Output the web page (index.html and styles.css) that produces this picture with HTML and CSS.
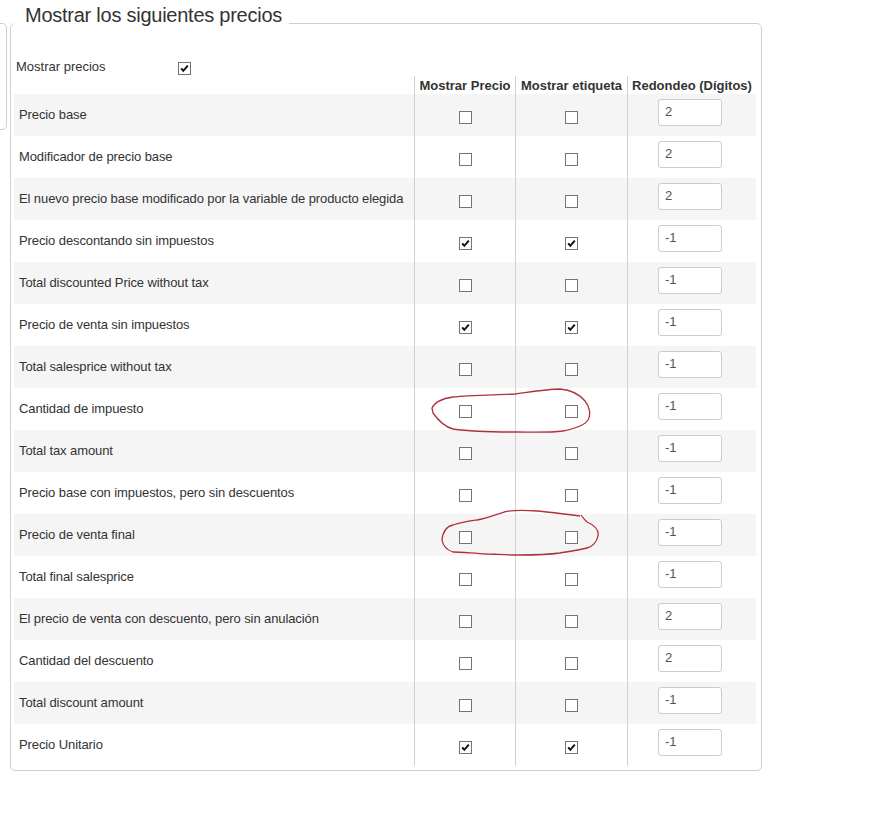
FILE: index.html
```html
<!DOCTYPE html>
<html lang="es">
<head>
  <meta charset="UTF-8" />
  <title>Mostrar los siguientes precios</title>
  <link rel="stylesheet" href="styles.css">
</head>
<body>
  <div class="page">
    <div class="side"></div>
    <fieldset class="prices">
      <legend>Mostrar los siguientes precios</legend>
      <div class="toggle">
        <label for="show_prices">Mostrar precios</label>
        <input type="checkbox" id="show_prices" checked />
      </div>
      <table class="price-table">
        <thead>
          <tr>
            <th class="c-label"></th>
            <th class="c-show">Mostrar Precio</th>
            <th class="c-tag">Mostrar etiqueta</th>
            <th class="c-round">Redondeo (Dígitos)</th>
          </tr>
        </thead>
        <tbody>
          <tr><td>Precio base</td><td><input type="checkbox" /></td><td><input type="checkbox" /></td><td><input type="text" value="2" /></td></tr>
          <tr><td>Modificador de precio base</td><td><input type="checkbox" /></td><td><input type="checkbox" /></td><td><input type="text" value="2" /></td></tr>
          <tr><td>El nuevo precio base modificado por la variable de producto elegida</td><td><input type="checkbox" /></td><td><input type="checkbox" /></td><td><input type="text" value="2" /></td></tr>
          <tr><td>Precio descontando sin impuestos</td><td><input type="checkbox" checked /></td><td><input type="checkbox" checked /></td><td><input type="text" value="-1" /></td></tr>
          <tr><td>Total discounted Price without tax</td><td><input type="checkbox" /></td><td><input type="checkbox" /></td><td><input type="text" value="-1" /></td></tr>
          <tr><td>Precio de venta sin impuestos</td><td><input type="checkbox" checked /></td><td><input type="checkbox" checked /></td><td><input type="text" value="-1" /></td></tr>
          <tr><td>Total salesprice without tax</td><td><input type="checkbox" /></td><td><input type="checkbox" /></td><td><input type="text" value="-1" /></td></tr>
          <tr><td>Cantidad de impuesto</td><td><input type="checkbox" /></td><td><input type="checkbox" /></td><td><input type="text" value="-1" /></td></tr>
          <tr><td>Total tax amount</td><td><input type="checkbox" /></td><td><input type="checkbox" /></td><td><input type="text" value="-1" /></td></tr>
          <tr><td>Precio base con impuestos, pero sin descuentos</td><td><input type="checkbox" /></td><td><input type="checkbox" /></td><td><input type="text" value="-1" /></td></tr>
          <tr><td>Precio de venta final</td><td><input type="checkbox" /></td><td><input type="checkbox" /></td><td><input type="text" value="-1" /></td></tr>
          <tr><td>Total final salesprice</td><td><input type="checkbox" /></td><td><input type="checkbox" /></td><td><input type="text" value="-1" /></td></tr>
          <tr><td>El precio de venta con descuento, pero sin anulación</td><td><input type="checkbox" /></td><td><input type="checkbox" /></td><td><input type="text" value="2" /></td></tr>
          <tr><td>Cantidad del descuento</td><td><input type="checkbox" /></td><td><input type="checkbox" /></td><td><input type="text" value="2" /></td></tr>
          <tr><td>Total discount amount</td><td><input type="checkbox" /></td><td><input type="checkbox" /></td><td><input type="text" value="-1" /></td></tr>
          <tr><td>Precio Unitario</td><td><input type="checkbox" checked /></td><td><input type="checkbox" checked /></td><td><input type="text" value="-1" /></td></tr>
        </tbody>
      </table>
    </fieldset>

    <!-- hand drawn marks over the screenshot -->
    <svg class="annot" width="871" height="823" viewBox="0 0 871 823">
      <path d="M432 408 C436 400 446 398 453 397 C470 395 495 395 515 394 C530 392 548 389 560 389 C572 390 580 395 585 401 C590 407 591 415 588 420 C584 426 573 429 563 431 C548 433 530 432 515 432 C500 432 475 432 453 429 C445 427 438 420 433 413 Z" />
      <path d="M442 540 C443 530 448 526 453 525 C462 522 470 521 477 520 C487 518 497 514 504 512 C512 510 525 510 537 511 C550 512 565 514 580 516 M581 515 C583 518 585 520 587 522 C594 525 599 530 598 536 C597 542 592 547 587 548 C575 551 565 552 560 553 C545 555 532 555 520 555 C505 555 495 554 487 554 C470 553 460 552 453 552 C447 550 443 546 442 540" />
    </svg>
  </div>
</body>
</html>
```

FILE: styles.css
```css
body {
  margin: 0;
  background: #fff;
  color: #333;
  font-family: "Liberation Sans", Arial, sans-serif;
  font-size: 13px;
}
.page {
  position: relative;
  display: flex;
  align-items: flex-start;
  gap: 3px;
}
.side {
  width: 6px;
  height: 105px;
  margin-top: 23px;
  border: 1px solid #cfcfcf;
  border-left: none;
  border-radius: 0 5px 5px 0;
}
.prices {
  margin: 3px 0 0 0;
  padding: 13px 5px 4px 3px;
  width: 742px;
  border: 1px solid #cfcfcf;
  border-radius: 5px;
  min-inline-size: auto;
}
.prices legend {
  padding: 0 7px 16px 11px;
  font-size: 20px;
  line-height: 24px;
  letter-spacing: -0.25px;
  color: #333;
}
.toggle {
  display: flex;
  align-items: center;
  height: 20px;
  padding-left: 2px;
}
.toggle label {
  width: 162px;
}
.toggle input {
  margin: 4px 0 0 0;
}
input[type="checkbox"] {
  appearance: none;
  -webkit-appearance: none;
  width: 13px;
  height: 13px;
  border: 1px solid #747474;
  border-radius: 0;
  background: #fff;
  box-sizing: border-box;
}
input[type="checkbox"]:checked {
  background: #fff url("data:image/svg+xml,%3Csvg xmlns='http://www.w3.org/2000/svg' viewBox='0 0 11 11'%3E%3Cpath d='M2.2 5.4l2.1 2.4L8.8 2.6' fill='none' stroke='%23111' stroke-width='2'/%3E%3C/svg%3E") no-repeat center / 11px 11px;
}
.price-table {
  width: 742px;
  border-collapse: separate;
  border-spacing: 0;
  table-layout: fixed;
}
.price-table th {
  height: 18px;
  padding: 0;
  font-weight: bold;
  text-align: center;
  vertical-align: middle;
  white-space: nowrap;
}
.price-table .c-label { width: 400px; }
.price-table .c-show { width: 100px; }
.price-table .c-tag { width: 111px; }
.price-table .c-round { width: 128px; }
.price-table th + th,
.price-table td + td {
  border-left: 1px solid #d0d0d0;
}
.price-table td {
  height: 42px;
  padding: 0 0 2px 5px;
  vertical-align: middle;
  box-sizing: border-box;
  white-space: nowrap;
  letter-spacing: -0.1px;
}
.price-table td + td {
  padding: 0;
  text-align: center;
}
.price-table tbody tr:nth-child(odd) td {
  background: #f5f5f5;
}
.price-table td input[type="checkbox"] {
  display: block;
  margin: 5px auto 0;
}
.price-table input[type="text"] {
  display: block;
  box-sizing: border-box;
  width: 64px;
  height: 27px;
  margin: 0 0 5px 30px;
  padding: 4px 6px 6px;
  border: 1px solid #cccccc;
  border-radius: 3px;
  font-family: "Liberation Sans", Arial, sans-serif;
  font-size: 13px;
  line-height: 15px;
  color: #555;
  background: #fff;
}
.annot {
  position: absolute;
  top: 0;
  left: 0;
  pointer-events: none;
}
.annot path {
  fill: none;
  stroke: #b0303c;
  stroke-width: 1.3;
}
```
